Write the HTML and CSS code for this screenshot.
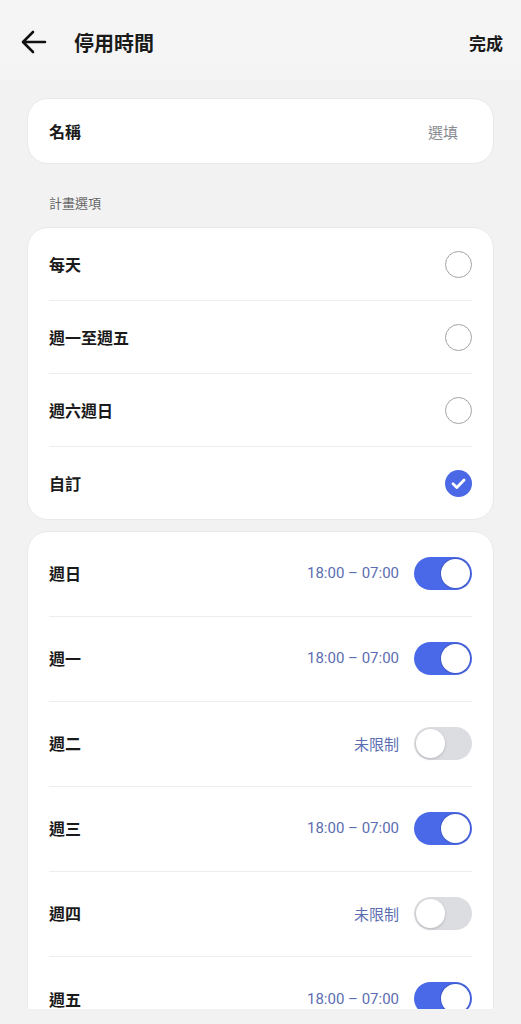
FILE: index.html
```html
<!DOCTYPE html>
<html>
<head>
    <meta charset="utf-8">
    <title>停用時間</title>
    <link rel="stylesheet" href="styles.css">
</head>
<body>
  <div class="screen">
    <div class="topbar">
      <svg class="back" width="26" height="24" viewBox="0 0 26 24">
        <path d="M24 12H3M12 2L2 12l10 10" fill="none" stroke="#111" stroke-width="2.6" stroke-linecap="round" stroke-linejoin="round"/>
      </svg>
      <div class="title">停用時間</div>
      <div class="done">完成</div>
    </div>

    <div class="content">
      <div class="card name-card">
        <span class="label">名稱</span>
        <span class="placeholder">選填</span>
      </div>

      <div class="section-label">計畫選項</div>

      <div class="card">
        <div class="row option">
          <span class="label">每天</span>
          <span class="radio"></span>
        </div>
        <div class="row option">
          <span class="label">週一至週五</span>
          <span class="radio"></span>
        </div>
        <div class="row option">
          <span class="label">週六週日</span>
          <span class="radio"></span>
        </div>
        <div class="row option">
          <span class="label">自訂</span>
          <span class="radio checked">
            <svg width="27" height="27" viewBox="0 0 27 27"><path d="M8 13.8l3.8 3.7 7.3-7.5" fill="none" stroke="#fff" stroke-width="2.8" stroke-linecap="round" stroke-linejoin="round"/></svg>
          </span>
        </div>
      </div>

      <div class="card days">
        <div class="row day">
          <span class="label">週日</span>
          <span class="value">18:00 – 07:00</span>
          <span class="toggle on"><span class="knob"></span></span>
        </div>
        <div class="row day">
          <span class="label">週一</span>
          <span class="value">18:00 – 07:00</span>
          <span class="toggle on"><span class="knob"></span></span>
        </div>
        <div class="row day">
          <span class="label">週二</span>
          <span class="value">未限制</span>
          <span class="toggle"><span class="knob"></span></span>
        </div>
        <div class="row day">
          <span class="label">週三</span>
          <span class="value">18:00 – 07:00</span>
          <span class="toggle on"><span class="knob"></span></span>
        </div>
        <div class="row day">
          <span class="label">週四</span>
          <span class="value">未限制</span>
          <span class="toggle"><span class="knob"></span></span>
        </div>
        <div class="row day">
          <span class="label">週五</span>
          <span class="value">18:00 – 07:00</span>
          <span class="toggle on"><span class="knob"></span></span>
        </div>
      </div>
    </div>
    <div class="bottom-gap"></div>
  </div>
</body>
</html>
```

FILE: styles.css
```css
  * {
    box-sizing: border-box;
  }

  body {
    margin: 0;
    background-color: #f2f2f2;
    font-family: Roboto, "Noto Sans CJK TC", sans-serif;
    color: #1a1a1a;
  }

  .screen {
    height: 1024px;
    display: flex;
    flex-direction: column;
  }

  .topbar {
    height: 84px;
    flex-shrink: 0;
    display: flex;
    align-items: center;
    padding: 0 18px 0 21px;
    background: linear-gradient(#f5f5f5 75%, #f2f2f2);
  }

  .back {
    display: block;
  }

  .title {
    margin-left: 27px;
    font-size: 20px;
    font-weight: 700;
    font-family: "Noto Sans CJK TC", sans-serif;
    flex: 1;
  }

  .done {
    font-size: 17px;
    font-weight: 700;
    font-family: "Noto Sans CJK TC", sans-serif;
  }

  .content {
    flex: 1;
    overflow: hidden;
    padding: 14px 27px 0;
  }

  .bottom-gap {
    height: 15px;
    flex-shrink: 0;
  }

  .card {
    background-color: #fff;
    border: 1px solid #e9e9e9;
    border-radius: 21px;
  }

  .label {
    font-family: "Noto Sans CJK TC", sans-serif;
    font-size: 16px;
    font-weight: 700;
    color: #1a1a1a;
  }

  .name-card {
    height: 66px;
    display: flex;
    align-items: center;
    justify-content: space-between;
    padding: 0 35px 0 21px;
  }

  .placeholder {
    font-family: "Noto Sans CJK TC", sans-serif;
    font-size: 15px;
    color: #8a8c92;
  }

  .section-label {
    font-family: "Noto Sans CJK TC", sans-serif;
    font-size: 13px;
    color: #666;
    line-height: 18px;
    padding-left: 22px;
    margin: 30px 0 15px;
  }

  .row {
    margin: 0 21px;
    display: flex;
    align-items: center;
    border-bottom: 1px solid #ededed;
  }

  .row:last-child {
    border-bottom: none;
  }

  .option {
    height: 73px;
    justify-content: space-between;
  }

  .option:last-child {
    height: 72px;
  }

  .radio {
    width: 27px;
    height: 27px;
    border-radius: 50%;
    border: 1.6px solid #a3a3a3;
  }

  .radio.checked {
    border: none;
    background-color: #4b69e6;
  }

  .radio svg {
    display: block;
  }

  .days {
    margin-top: 11px;
  }

  .day {
    height: 85px;
    padding-bottom: 2px;
  }

  .day .label {
    flex: 1;
  }

  .value {
    font-size: 15px;
    color: #5b6db2;
    margin-right: 15px;
  }

  .toggle {
    width: 58px;
    height: 33px;
    border-radius: 17px;
    background-color: #dcdde1;
    display: flex;
    align-items: center;
    padding: 0 2px;
  }

  .toggle .knob {
    width: 29px;
    height: 29px;
    border-radius: 50%;
    background-color: #fff;
    box-shadow: 0 1px 3px rgba(0, 0, 0, 0.18);
  }

  .toggle.on {
    background-color: #4a69e8;
    justify-content: flex-end;
  }

  .toggle.on .knob {
    box-shadow: 0 0 0 1px #3f59c9;
  }
```
